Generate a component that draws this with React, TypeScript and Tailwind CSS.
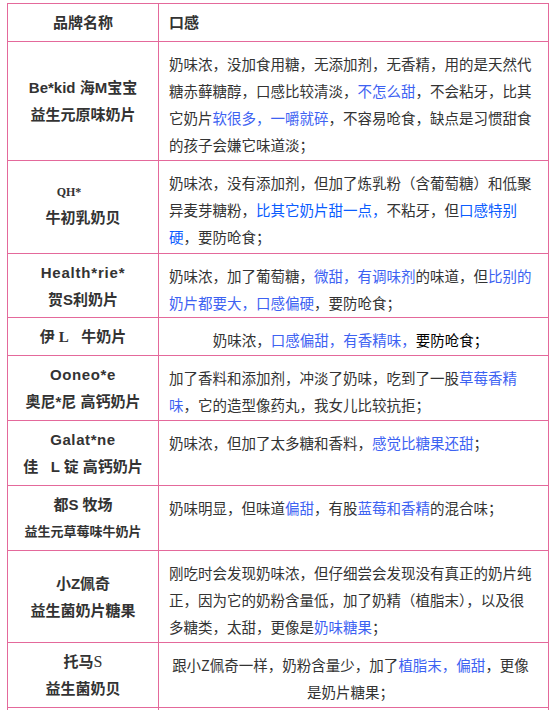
import React from "react";

const cell = "border border-[#e4699b]";
const brandCell =
  "border border-[#e4699b] text-center align-middle font-bold text-[15px] leading-[27px] text-[#333] font-['Liberation_Sans','Noto_Sans_CJK_SC',sans-serif]";
const textCell =
  "border border-[#e4699b] align-top pt-[8px] pl-[10px] pr-[16px] text-[14.5px] leading-[27px] text-[#333] font-['Noto_Sans_CJK_SC',sans-serif]";
const serif = "font-['Liberation_Serif','Noto_Sans_CJK_SC',serif]";

const B = ({ children }: { children: React.ReactNode }) => (
  <span className="text-[#3d62f2]">{children}</span>
);
const B2 = ({ children }: { children: React.ReactNode }) => (
  <span className="text-[#0a5cff]">{children}</span>
);

export default function App() {
  return (
    <div className="min-h-[710px] bg-white pt-[3px] pl-[7px]">
      <table className="w-[542px] table-fixed border-collapse">
        <colgroup>
          <col className="w-[151px]" />
          <col />
        </colgroup>
        <tbody>
          <tr className="h-[38px]">
            <td className={`${cell} text-center font-bold text-[15px] text-[#333] font-['Noto_Sans_CJK_SC',sans-serif]`}>
              品牌名称
            </td>
            <td className={`${cell} pl-[10px] font-bold text-[15px] text-[#333] font-['Noto_Sans_CJK_SC',sans-serif]`}>
              口感
            </td>
          </tr>

          <tr className="h-[119px]">
            <td className={brandCell}>
              <div>Be*kid 海M宝宝</div>
              <div>益生元原味奶片</div>
            </td>
            <td className={textCell}>
              奶味浓，没加食用糖，无添加剂，无香精，用的是天然代糖赤藓糖醇，口感比较清淡，
              <B>不怎么甜</B>，不会粘牙，比其它奶片<B>软很多，一嚼就碎</B>
              ，不容易呛食，缺点是习惯甜食的孩子会嫌它味道淡；
            </td>
          </tr>

          <tr className="h-[93px]">
            <td className={`${brandCell} text-[#2b2b38]`}>
              <div className={`${serif} text-[12px] leading-[22px] pr-[28px]`}>QH*</div>
              <div className="text-[15px] leading-[30px]">牛初乳奶贝</div>
            </td>
            <td className={`${textCell} text-[#000]`}>
              奶味浓，没有添加剂，但加了炼乳粉（含葡萄糖）和低聚异麦芽糖粉，
              <B2>比其它奶片甜一点，</B2>不粘牙，但<B2>口感特别硬</B2>，要防呛食；
            </td>
          </tr>

          <tr className="h-[64px]">
            <td className={brandCell}>
              <div className="tracking-[0.8px]">Health*rie*</div>
              <div>贺S利奶片</div>
            </td>
            <td className={textCell}>
              奶味浓，加了葡萄糖，<B>微甜，有调味剂</B>的味道，但<B>比别的奶片都要大，口感偏硬</B>
              ，要防呛食；
            </td>
          </tr>

          <tr className="h-[38px]">
            <td className={`${brandCell} text-[#2b2b38] whitespace-pre`}>
              伊 <span className={serif}>L</span>{"   "}牛奶片
            </td>
            <td className={`${textCell} text-center pl-[10px] pr-[10px]`}>
              奶味浓，<B>口感偏甜，有香精味，</B>
              <span className="text-[#000]">要防呛食；</span>
            </td>
          </tr>

          <tr className="h-[65px]">
            <td className={brandCell}>
              <div className="tracking-[0.6px]">Ooneo*e</div>
              <div>奥尼*尼 高钙奶片</div>
            </td>
            <td className={textCell}>
              加了香料和添加剂，冲淡了奶味，吃到了一股<B>草莓香精味</B>
              ，它的造型像药丸，我女儿比较抗拒；
            </td>
          </tr>

          <tr className="h-[65px]">
            <td className={brandCell}>
              <div className="tracking-[0.6px]">Galat*ne</div>
              <div className="whitespace-pre">佳   L 锭 高钙奶片</div>
            </td>
            <td className={textCell}>
              奶味浓，但加了太多糖和香料，<B>感觉比糖果还甜</B>；
            </td>
          </tr>

          <tr className="h-[65px]">
            <td className={brandCell}>
              <div>都S 牧场</div>
              <div className="text-[13px] font-semibold">益生元草莓味牛奶片</div>
            </td>
            <td className={textCell}>
              奶味明显，但味道<B>偏甜</B>，有股<B>蓝莓和香精</B>的混合味；
            </td>
          </tr>

          <tr className="h-[92px]">
            <td className={brandCell}>
              <div>小Z佩奇</div>
              <div>益生菌奶片糖果</div>
            </td>
            <td className={textCell}>
              刚吃时会发现奶味浓，但仔细尝会发现没有真正的奶片纯正，因为它的奶粉含量低，加了奶精（植脂末），以及很多糖类，太甜，更像是
              <B>奶味糖果</B>；
            </td>
          </tr>

          <tr className="h-[65px]">
            <td className={`${brandCell} text-[#2b2b38]`}>
              <div>
                托马<span className={`${serif} font-normal text-[16px]`}>S</span>
              </div>
              <div>益生菌奶贝</div>
            </td>
            <td className={`${textCell} text-center text-[#000] pl-[10px] pr-[10px]`}>
              跟小Z佩奇一样，奶粉含量少，加了<B>植脂末，偏甜</B>，更像是奶片糖果；
            </td>
          </tr>

          <tr className="h-[65px]">
            <td className={brandCell}></td>
            <td className={textCell}></td>
          </tr>
        </tbody>
      </table>
    </div>
  );
}
